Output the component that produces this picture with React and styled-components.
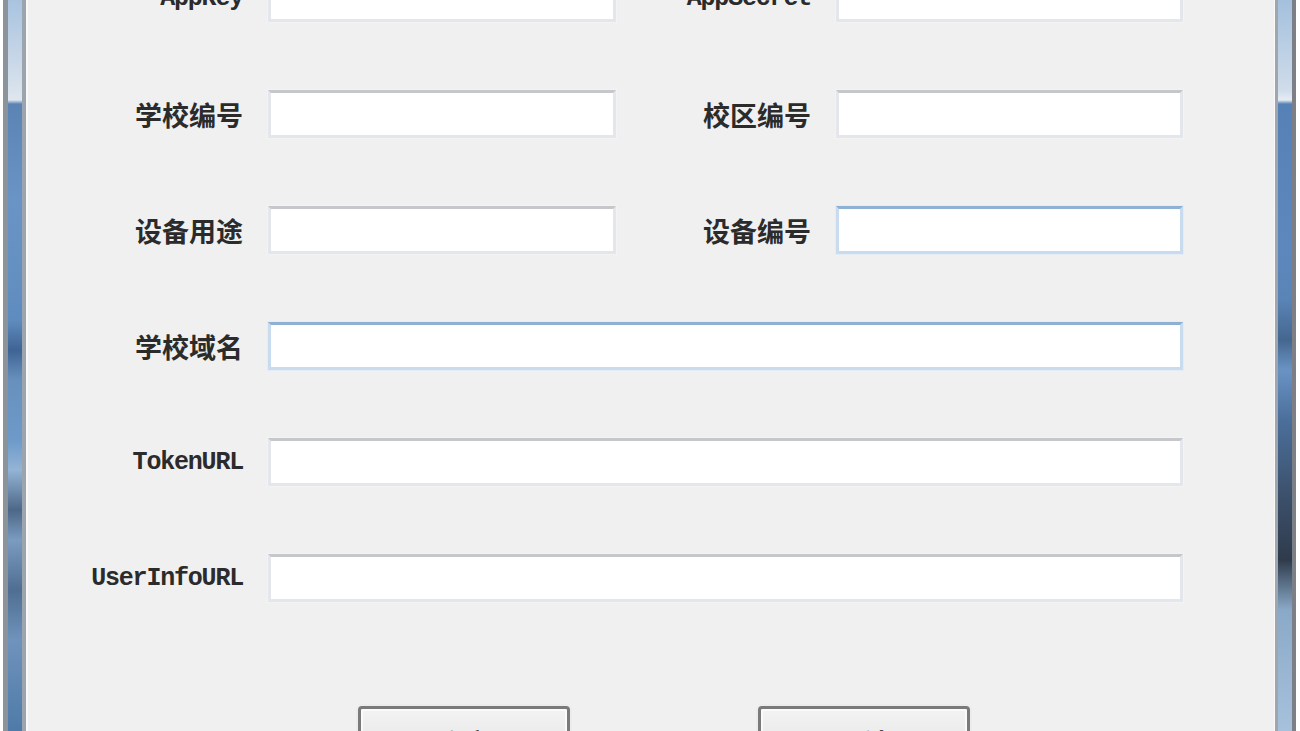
import styled, { createGlobalStyle } from "styled-components";

const GlobalStyle = createGlobalStyle`
  html, body {
    margin: 0;
    padding: 0;
    background: #fff;
  }
  body {
    overflow: hidden;
  }
`;

const Window = styled.div`
  display: flex;
  height: 731px;
  padding: 0 4px 0 3px;
  box-sizing: border-box;
  overflow: hidden;
`;

const LeftFrame = styled.div`
  flex: 0 0 23px;
  box-sizing: border-box;
  border-left: 5px solid #8c939b;
  border-right: 4px solid #9ca4ad;
  background: linear-gradient(
    to bottom,
    #a9c3df 0px,
    #c8d7e8 60px,
    #dfe6ee 100px,
    #5b84b5 104px,
    #6a94c5 200px,
    #5f8cbf 320px,
    #3f6494 350px,
    #6890bd 380px,
    #6d9ac9 440px,
    #93b4d6 470px,
    #4d6787 510px,
    #7a9cc0 540px,
    #4f6e92 590px,
    #6f93bc 640px,
    #4f7aa8 731px
  );
`;

const RightFrame = styled.div`
  flex: 0 0 21px;
  box-sizing: border-box;
  border-left: 3px solid #a0a6ae;
  border-right: 4px solid #7c7f85;
  background: linear-gradient(
    to bottom,
    #a4c0dd 0px,
    #cfdcea 90px,
    #e6ecf2 100px,
    #5681b6 104px,
    #5d88bd 250px,
    #5a84b5 300px,
    #44678f 340px,
    #6a93c4 370px,
    #4b6f9b 420px,
    #3b4f69 500px,
    #2f3b4c 560px,
    #8aa9c8 610px,
    #a7c1dc 731px
  );
`;

const Client = styled.div`
  flex: 1;
  background: #f0f0f0;
  border-left: 2px solid #f9f9f9;
  border-right: 1px solid #f9f9f9;
  overflow: hidden;
`;

const Form = styled.div`
  display: grid;
  grid-template-columns: 215px 348px 170px 347px;
  grid-auto-rows: 48px;
  column-gap: 25px;
  row-gap: 68px;
  margin-top: -26px;
`;

const Label = styled.div`
  display: flex;
  align-items: center;
  justify-content: flex-end;
  white-space: nowrap;
  color: #2b2b2b;
  font-family: ${(p) =>
    p.$latin
      ? `"Liberation Mono", monospace`
      : `"Noto Sans CJK SC", sans-serif`};
  font-size: ${(p) => (p.$latin ? "25px" : "27px")};
  font-weight: bold;
  letter-spacing: ${(p) => (p.$latin ? "-1.2px" : "0")};
`;

const Field = styled.input`
  box-sizing: border-box;
  width: 100%;
  height: 48px;
  margin: 0;
  padding: 0 6px;
  background: #fff;
  outline: none;
  border: 3px solid ${(p) => (p.$active ? "#c9dcef" : "#e3e6eb")};
  border-top-color: ${(p) => (p.$active ? "#8db0d5" : "#c5c7cb")};
  box-shadow: 0 0 0 1px ${(p) => (p.$active ? "#e4edf6" : "#f3f3f3")};
  grid-column: ${(p) => (p.$wide ? "2 / 5" : "auto")};
`;

const ButtonRow = styled.div`
  display: flex;
  gap: 188px;
  padding-left: 330px;
  margin-top: 104px;
`;

const Button = styled.button`
  width: 212px;
  height: 58px;
  flex: 0 0 auto;
  box-sizing: border-box;
  border: 3px solid #7a7a7a;
  border-radius: 4px;
  box-shadow: inset 0 0 0 2px #fafafa, 0 0 0 2px #ececec;
  background: linear-gradient(to bottom, #f3f3f3 0%, #ebebeb 50%, #dddddd 51%, #cfcfcf 100%);
  color: #222;
  font-family: "Noto Sans CJK SC", sans-serif;
  font-size: 27px;
  font-weight: bold;
  padding: 14px 0 0;
  display: flex;
  justify-content: center;
  align-items: flex-start;
`;

const rows = [
  [
    { label: "AppKey", latin: true },
    { label: "AppSecret", latin: true },
  ],
  [{ label: "学校编号" }, { label: "校区编号" }],
  [{ label: "设备用途" }, { label: "设备编号", active: true }],
];

const wideRows = [
  { label: "学校域名", active: true },
  { label: "TokenURL", latin: true },
  { label: "UserInfoURL", latin: true },
];

export default function App() {
  return (
    <>
      <GlobalStyle />
      <Window>
        <LeftFrame />
        <Client>
          <Form>
            {rows.map((row) =>
              row.map((f) => [
                <Label key={f.label + "-l"} $latin={f.latin}>
                  {f.label}
                </Label>,
                <Field key={f.label + "-f"} $active={f.active} />,
              ])
            )}
            {wideRows.map((f) => [
              <Label key={f.label + "-l"} $latin={f.latin}>
                {f.label}
              </Label>,
              <Field key={f.label + "-f"} $wide $active={f.active} />,
            ])}
          </Form>
          <ButtonRow>
            <Button>确定</Button>
            <Button>取消</Button>
          </ButtonRow>
        </Client>
        <RightFrame />
      </Window>
    </>
  );
}
